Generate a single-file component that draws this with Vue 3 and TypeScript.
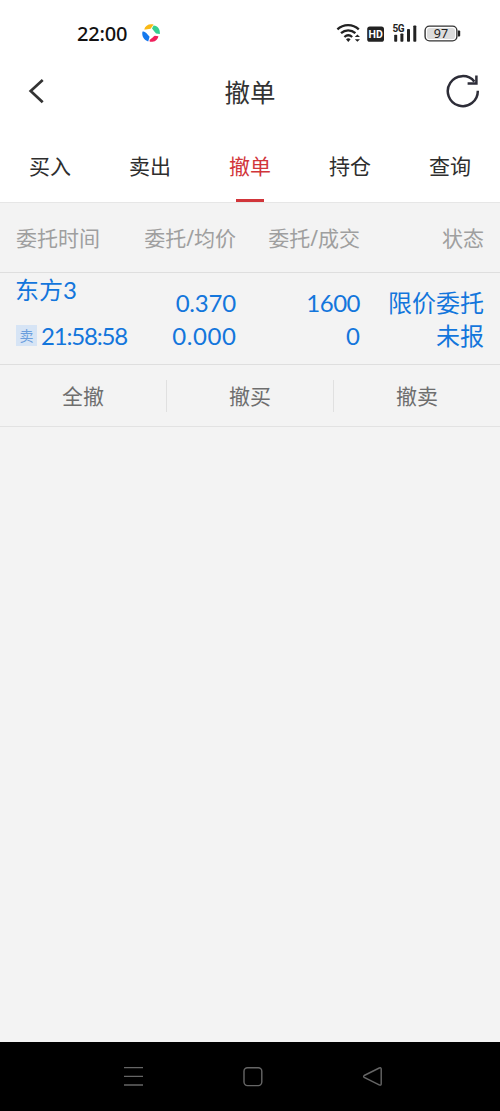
<script setup lang="ts">
import { ref } from 'vue'

interface Order {
  name: string
  side: string
  time: string
  price: string
  average: string
  amount: string
  filled: string
  kind: string
  state: string
}

const tabs: string[] = ['买入', '卖出', '撤单', '持仓', '查询']
const activeTab = ref('撤单')
const columns: string[] = ['委托时间', '委托/均价', '委托/成交', '状态']
const orders: Order[] = [
  {
    name: '东方3',
    side: '卖',
    time: '21:58:58',
    price: '0.370',
    average: '0.000',
    amount: '1600',
    filled: '0',
    kind: '限价委托',
    state: '未报',
  },
]
const actions: string[] = ['全撤', '撤买', '撤卖']
</script>

<template>
  <div class="screen">
    <div class="status">
      <span class="clock">22:00</span>
      <svg class="app-dot" width="20" height="20" viewBox="0 0 20 20">
        <path d="M3.2 6.6C4.2 2.4 8.2 .4 12.6 1.6L9.6 5.8C7.4 6 5.4 6.6 3.2 6.6Z" fill="#f9b916" />
        <path d="M12.6 2.6C16.8 3 19.2 6.2 18.9 11L15 10.6C13.4 8.6 12 7 11 5.6Z" fill="#35cf91" />
        <path d="M17.4 13.2C16.4 17.6 13.2 19.2 8.8 18.8L8.6 17C10.6 15.4 12.4 13.8 13.8 12.8Z" fill="#f0205c" />
        <path d="M1.4 8.8C3.6 7.6 5.6 10.4 8.6 13.8L7.2 18.4C3 17.2 .6 13.4 1.4 8.8Z" fill="#1479ee" />
      </svg>
      <div class="indicators">
        <svg width="125" height="24" viewBox="0 0 125 24">
          <g fill="none" stroke="#222" stroke-width="2.3">
            <path d="M1.4 8.3C7.4 2.6 16.8 2.6 22.8 8.3" />
            <path d="M5 12.2C9.2 8.4 15.2 8.4 19.4 12.2" />
            <path d="M8.4 16C10.8 13.9 13.8 13.9 16.2 16" />
          </g>
          <path d="M10 18.2Q12.3 16.5 14.6 18.2L12.3 20.9Z" fill="#222" />
          <path d="M18.8 16L21.4 13.4L24 16ZM18.8 18.2L21.4 20.8L24 18.2Z" fill="#222" />
          <rect x="31.2" y="5.5" width="16.8" height="15.3" rx="2.6" fill="#222" />
          <text x="39.6" y="17" class="hd" text-anchor="middle">HD</text>
          <text x="56.4" y="10.7" class="net" textLength="12.3">5G</text>
          <g fill="#222">
            <rect x="58.2" y="13.8" width="3" height="7" rx=".8" />
            <rect x="64.4" y="12.5" width="3" height="8.3" rx=".8" />
            <rect x="71" y="8" width="3" height="12.8" rx=".8" />
            <rect x="77.3" y="4.5" width="3" height="16.3" rx=".8" />
            <path d="M122 9.5h1.2q1 0 1 1v4q0 1-1 1H122Z" />
          </g>
          <rect x="89.1" y="5.1" width="31.8" height="14.8" rx="4.4" fill="#fff" stroke="#333" stroke-width="1.4" />
          <rect x="91" y="7" width="28" height="11" rx="2.8" fill="#dcdcdc" />
          <text x="105" y="17" class="charge" text-anchor="middle">97</text>
        </svg>
      </div>
    </div>

    <header class="title-bar">
      <svg width="20" height="30" viewBox="0 0 20 30">
        <path d="M15.7 3L3.7 14L15.7 25.3" fill="none" stroke="#333" stroke-width="2.7" />
      </svg>
      <h1>撤单</h1>
      <svg width="36" height="36" viewBox="0 0 36 36" fill="none" stroke="#2d2d38" stroke-width="2.5">
        <path d="M32.8 16.8A15 15 0 1 1 29.4 7.6" />
        <path d="M31.4 1.6V9.6H22.6" />
      </svg>
    </header>

    <nav class="tabs">
      <button
        v-for="tab in tabs"
        :key="tab"
        :class="['tab', { active: tab === activeTab }]"
        @click="activeTab = tab"
      >
        {{ tab }}
      </button>
    </nav>

    <div class="grid head">
      <span v-for="column in columns" :key="column">{{ column }}</span>
    </div>

    <div v-for="order in orders" :key="order.time" class="grid order">
      <div class="first">
        <div class="name">{{ order.name }}</div>
        <div class="when"><span class="side">{{ order.side }}</span><span class="time">{{ order.time }}</span></div>
      </div>
      <div class="pair"><span class="price">{{ order.price }}</span><span class="average">{{ order.average }}</span></div>
      <div class="pair"><span class="amount">{{ order.amount }}</span><span>{{ order.filled }}</span></div>
      <div class="pair"><span>{{ order.kind }}</span><span>{{ order.state }}</span></div>
    </div>

    <div class="actions">
      <button v-for="action in actions" :key="action">{{ action }}</button>
    </div>

    <footer class="system-nav">
      <svg width="22" height="22" viewBox="0 0 22 22"><path d="M2 1.6H21M2 10.4H21M2 19H21" /></svg>
      <svg width="22" height="22" viewBox="0 0 22 22"><rect x="2" y="1.8" width="17.8" height="17.8" rx="3.5" /></svg>
      <svg width="22" height="22" viewBox="0 0 22 22"><path d="M3.2 9.5L18.2 2Q20.2 1.3 20.2 3V17.8Q20.2 19.8 18.2 18.8L3.2 11.4Q2 10.4 3.2 9.5Z" /></svg>
    </footer>
  </div>
</template>

<style>
body {
  margin: 0;
}
</style>

<style scoped>
.screen {
  box-sizing: border-box;
  display: flex;
  flex-direction: column;
  width: 500px;
  height: 1111px;
  background: #f3f3f3;
  font-family: Lato, "Noto Sans CJK SC", sans-serif;
  overflow: hidden;
}
button {
  padding: 0;
  border: 0;
  background: none;
  font: inherit;
  color: inherit;
}
svg {
  display: block;
  flex: none;
}
.status {
  display: flex;
  align-items: center;
  height: 66px;
  padding-left: 77px;
  background: #fff;
}
.clock {
  width: 64px;
  padding-top: 1px;
  font: 500 20px/24px "Noto Sans", sans-serif;
  letter-spacing: -0.2px;
  color: #111;
}
.indicators {
  margin-left: 175px;
}
.hd {
  font: 700 10.5px Roboto, sans-serif;
  fill: #fff;
}
.net {
  font: 700 10px Roboto, sans-serif;
  fill: #222;
}
.charge {
  font: 400 12.5px "Noto Sans", sans-serif;
  fill: #222;
}
.title-bar {
  display: flex;
  align-items: center;
  justify-content: space-between;
  box-sizing: border-box;
  height: 52px;
  padding: 0 19px 0 27px;
  background: #fff;
}
.title-bar h1 {
  margin: 0 0 0 8px;
  font-size: 25.5px;
  line-height: 36px;
  font-weight: 400;
  color: #333;
}
.tabs {
  display: flex;
  height: 84px;
  background: #fff;
  border-bottom: 1px solid #e6e6e6;
}
.tab {
  position: relative;
  flex: 1;
  height: 84px;
  padding-top: 11px;
  font-size: 21px;
  line-height: 30px;
  color: #2e2e2e;
}
.tab.active {
  color: #d1353a;
}
.tab.active::after {
  content: "";
  position: absolute;
  left: 36px;
  bottom: 0;
  width: 28px;
  height: 3px;
  background: #d1353a;
}
.grid {
  display: grid;
  grid-template-columns: 96px 124px 124px 124px;
  box-sizing: border-box;
  padding: 0 16px;
  border-bottom: 1px solid #dedede;
}
.head {
  height: 70px;
  align-items: center;
  font-family: "Noto Sans", "Noto Sans CJK SC", sans-serif;
  font-size: 21px;
  line-height: 30px;
  color: #9f9f9f;
}
.head span {
  white-space: nowrap;
}
.head span:not(:first-child) {
  text-align: right;
}
.order {
  height: 92px;
  font-size: 24px;
  color: #1376dc;
}
.name {
  height: 33px;
  margin-left: -1px;
  line-height: 33px;
}
.first {
  white-space: nowrap;
}
.when {
  display: flex;
  align-items: center;
  gap: 4px;
  height: 33px;
  margin-top: 13px;
}
.side {
  flex: none;
  width: 21px;
  height: 21px;
  background: #d6e4f5;
  font-size: 14px;
  line-height: 21px;
  text-align: center;
  color: #6b9edd;
}
.time {
  letter-spacing: -1.2px;
}
.price {
  letter-spacing: -0.2px;
}
.average {
  letter-spacing: 0.6px;
  margin-right: -0.6px;
}
.amount {
  letter-spacing: -0.5px;
}
.pair {
  display: flex;
  flex-direction: column;
  align-items: flex-end;
  padding-top: 13px;
  line-height: 33px;
  white-space: nowrap;
}
.actions {
  display: flex;
  align-items: center;
  height: 61px;
  border-bottom: 1px solid #e2e2e2;
  font-size: 21px;
  color: #6e6e6e;
}
.actions button {
  flex: 1;
  height: 32px;
  line-height: 32px;
}
.actions button + button {
  border-left: 1px solid #e0e0e0;
}
.system-nav {
  display: flex;
  align-items: center;
  justify-content: space-between;
  box-sizing: border-box;
  height: 69px;
  margin-top: auto;
  padding: 0 117px 0 122px;
  background: #000;
}
.system-nav svg {
  fill: none;
  stroke: #666;
  stroke-width: 1.4;
}
</style>
